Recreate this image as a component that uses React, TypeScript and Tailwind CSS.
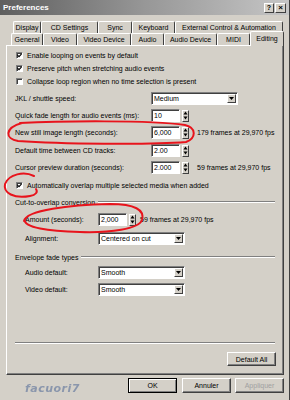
import React from 'react'

const font = { fontFamily: '"Liberation Sans", Arial, sans-serif' }

function Check({ checked }: { checked?: boolean }) {
  return (
    <div className="w-[7px] h-[7px] bg-white border-t border-l border-[#808080] border-r border-b border-r-white border-b-white shadow-[inset_1px_1px_0_#404040] flex items-center justify-center">
      {checked && (
        <svg width="5" height="5" viewBox="0 0 5 5">
          <path d="M0.5 2.2 L2 3.7 L4.6 0.8" stroke="#000" strokeWidth="1.1" fill="none" />
        </svg>
      )}
    </div>
  )
}

function CheckRow({ checked, label }: { checked?: boolean; label: string }) {
  return (
    <div className="h-[13px] flex items-center ml-[1px]">
      <Check checked={checked} />
      <span className="ml-[4px]">{label}</span>
    </div>
  )
}

function Sunken({ className, children }: { className?: string; children?: React.ReactNode }) {
  return (
    <div
      className={
        'h-[13px] bg-white border border-t-[#808080] border-l-[#808080] border-r-white border-b-white shadow-[inset_1px_1px_0_#404040] flex items-center ' +
        (className || '')
      }
    >
      {children}
    </div>
  )
}

function Spinner() {
  return (
    <div className="w-[7px] h-[12px] ml-[2px] bg-[#d4d0c8] border border-t-white border-l-white border-r-[#404040] border-b-[#404040] flex flex-col items-center justify-center">
      <svg width="5" height="9" viewBox="0 0 5 9">
        <path d="M2.5 0.5 L4.5 3.5 L0.5 3.5 Z" fill="#000" />
        <path d="M0.5 5.5 L4.5 5.5 L2.5 8.5 Z" fill="#000" />
      </svg>
    </div>
  )
}

function SpinBox({ value }: { value: string }) {
  return (
    <div className="flex items-center">
      <Sunken className="w-[29px] pl-[2px]">{value}</Sunken>
      <Spinner />
    </div>
  )
}

function Combo({ value }: { value: string }) {
  return (
    <Sunken className="w-[87px] pl-[2px] justify-between">
      <span>{value}</span>
      <div className="w-[9px] h-[9px] mr-[1px] bg-[#d4d0c8] border border-t-white border-l-white border-r-[#404040] border-b-[#404040] flex items-center justify-center">
        <svg width="5" height="3" viewBox="0 0 5 3">
          <path d="M0 0 L5 0 L2.5 3 Z" fill="#000" />
        </svg>
      </div>
    </Sunken>
  )
}

function FormRow({ label, children, note, className }: { label: string; children: React.ReactNode; note?: string; className?: string }) {
  return (
    <div className={'h-[13px] flex items-center ' + (className || '')}>
      <span className="w-[136px] shrink-0">{label}</span>
      {children}
      {note && <span className="ml-[8px]">{note}</span>}
    </div>
  )
}

function GroupLabel({ label, className }: { label: string; className?: string }) {
  return (
    <div className={'h-[12px] flex items-center ' + (className || '')}>
      <span>{label}</span>
      <div className="flex-1 ml-[3px] h-[2px] border-t border-t-[#808080] border-b border-b-white" />
    </div>
  )
}

function Button({ label, disabled, isDefault, className }: { label: string; disabled?: boolean; isDefault?: boolean; className?: string }) {
  return (
    <div
      className={
        'w-[49px] flex items-center justify-center bg-[#d4d0c8] border ' +
        (isDefault
          ? 'border-black shadow-[inset_1px_1px_0_#fff,inset_-1px_-1px_0_#808080] '
          : 'border-t-white border-l-white border-r-[#404040] border-b-[#404040] shadow-[inset_-1px_-1px_0_#808080] ') +
        (disabled ? 'text-[#a0a0a0] ' : '') +
        (className || '')
      }
    >
      {label}
    </div>
  )
}

function Tab({ label, w, selected }: { label: string; w: number; selected?: boolean }) {
  return (
    <div
      style={{ width: w }}
      className={
        'flex items-center justify-center border-l border-t border-white border-r border-r-[#404040] rounded-t-[2px] bg-[#d4d0c8] ' +
        (selected ? 'h-[15px] -mt-[2px] relative z-10 -mb-[1px] pb-[2px]' : 'h-[12px]')
      }
    >
      {label}
    </div>
  )
}

export default function App() {
  return (
    <div className="relative w-[290px] h-[400px] bg-[#d4d0c8] overflow-hidden text-[7px] leading-none text-black border-r border-r-[#404040]" style={font}>
      {/* title bar */}
      <div className="h-[15px] bg-linear-to-r from-[#5f5f5f] via-[#979797] to-[#c6c6c6] flex items-center pl-[3px] pr-[3px]">
        <span className="text-white font-bold text-[8px]">Preferences</span>
        <div className="flex-1" />
        <div className="w-[10px] h-[10px] bg-[#d4d0c8] border border-t-white border-l-white border-r-[#404040] border-b-[#404040] flex items-center justify-center text-[7px] font-bold">?</div>
        <div className="w-[11px] h-[10px] ml-[1px] bg-[#d4d0c8] border border-t-white border-l-white border-r-[#404040] border-b-[#404040] flex items-center justify-center text-[8px] font-bold">×</div>
      </div>

      {/* tabs */}
      <div className="pt-[6px]">
        <div className="flex ml-[13px] h-[12px]">
          <Tab label="Display" w={28} />
          <Tab label="CD Settings" w={57} />
          <Tab label="Sync" w={34} />
          <Tab label="Keyboard" w={43} />
          <Tab label="External Control & Automation" w={108} />
        </div>
        <div className="flex ml-[11px] h-[12px] items-end">
          <Tab label="General" w={32} />
          <Tab label="Video" w={34} />
          <Tab label="Video Device" w={54} />
          <Tab label="Audio" w={33} />
          <Tab label="Audio Device" w={53} />
          <Tab label="MIDI" w={33} />
          <Tab label="Editing" w={34} selected />
        </div>
      </div>

      {/* panel */}
      <div className="ml-[6px] w-[278px] h-[330px] border border-t-white border-l-white border-r-[#404040] border-b-[#404040] shadow-[inset_-1px_-1px_0_#808080] flex flex-col pl-[8px] pr-[8px] pt-[3px] pb-[8px]">
        <CheckRow checked label="Enable looping on events by default" />
        <CheckRow checked label="Preserve pitch when stretching audio events" />
        <CheckRow label="Collapse loop region when no time selection is present" />

        <FormRow label="JKL / shuttle speed:" className="mt-[4px]">
          <Combo value="Medium" />
        </FormRow>
        <FormRow label="Quick fade length for audio events (ms):" className="mt-[4px]">
          <SpinBox value="10" />
        </FormRow>
        <FormRow label="New still image length (seconds):" note="179 frames at 29,970 fps" className="mt-[4px]">
          <SpinBox value="6,000" />
        </FormRow>
        <FormRow label="Default time between CD tracks:" className="mt-[5px]">
          <SpinBox value="2.00" />
        </FormRow>
        <FormRow label="Cursor preview duration (seconds):" note="59 frames at 29,970 fps" className="mt-[4px]">
          <SpinBox value="2.000" />
        </FormRow>
        <div className="mt-[5px]">
          <CheckRow checked label="Automatically overlap multiple selected media when added" />
        </div>

        <GroupLabel label="Cut-to-overlap conversion" className="mt-[4px]" />
        <div className="h-[13px] flex items-center mt-[5px] pl-[10px]">
          <span className="w-[73px] shrink-0">Amount (seconds):</span>
          <SpinBox value="2,000" />
          <span className="ml-[4px]">59 frames at 29,970 fps</span>
        </div>
        <div className="h-[13px] flex items-center mt-[6px] pl-[10px]">
          <span className="w-[73px] shrink-0">Alignment:</span>
          <Combo value="Centered on cut" />
        </div>

        <GroupLabel label="Envelope fade types" className="mt-[6px]" />
        <div className="h-[13px] flex items-center mt-[3px] pl-[10px]">
          <span className="w-[73px] shrink-0">Audio default:</span>
          <Combo value="Smooth" />
        </div>
        <div className="h-[13px] flex items-center mt-[4px] pl-[10px]">
          <span className="w-[73px] shrink-0">Video default:</span>
          <Combo value="Smooth" />
        </div>

        <div className="flex-1" />
        <div className="h-[2px] border-t border-t-[#808080] border-b border-b-white" />
        <div className="flex justify-end mt-[8px] -mr-[1px]">
          <Button label="Default All" className="h-[14px]" />
        </div>
      </div>

      {/* footer */}
      <div className="flex items-start pt-[3px] pr-[5px]">
        <span className="ml-[25px] mt-[5px] text-[11px] font-bold italic tracking-[0.5px] text-[#8a96ac] blur-[0.4px]" style={{ fontFamily: '"DejaVu Sans", sans-serif' }}>
          facuori7
        </span>
        <div className="flex-1" />
        <Button label="OK" isDefault className="h-[15px]" />
        <Button label="Annuler" className="h-[15px] ml-[5px]" />
        <Button label="Appliquer" disabled className="h-[15px] ml-[4px]" />
      </div>

      {/* red hand-drawn marks */}
      <svg className="absolute left-0 top-0 pointer-events-none" width="290" height="400" viewBox="0 0 290 400">
        <g stroke="#e8141c" strokeWidth="2" fill="none" strokeLinecap="round">
          <path d="M20 123 C60 121, 150 120, 185 125 C197 128, 196 138, 186 142 C150 145, 60 144, 18 141 C5 139, 4 128, 22 123" />
          <path d="M34 176 C24 171, 9 174, 5 184 C3 193, 14 199, 30 196 C36 195, 38 192, 36 189" />
          <path d="M24 221 C26 210, 70 205, 110 204 C135 204, 145 210, 142 220 C139 229, 110 233, 80 232 C50 231, 22 228, 25 219" />
        </g>
      </svg>
    </div>
  )
}
